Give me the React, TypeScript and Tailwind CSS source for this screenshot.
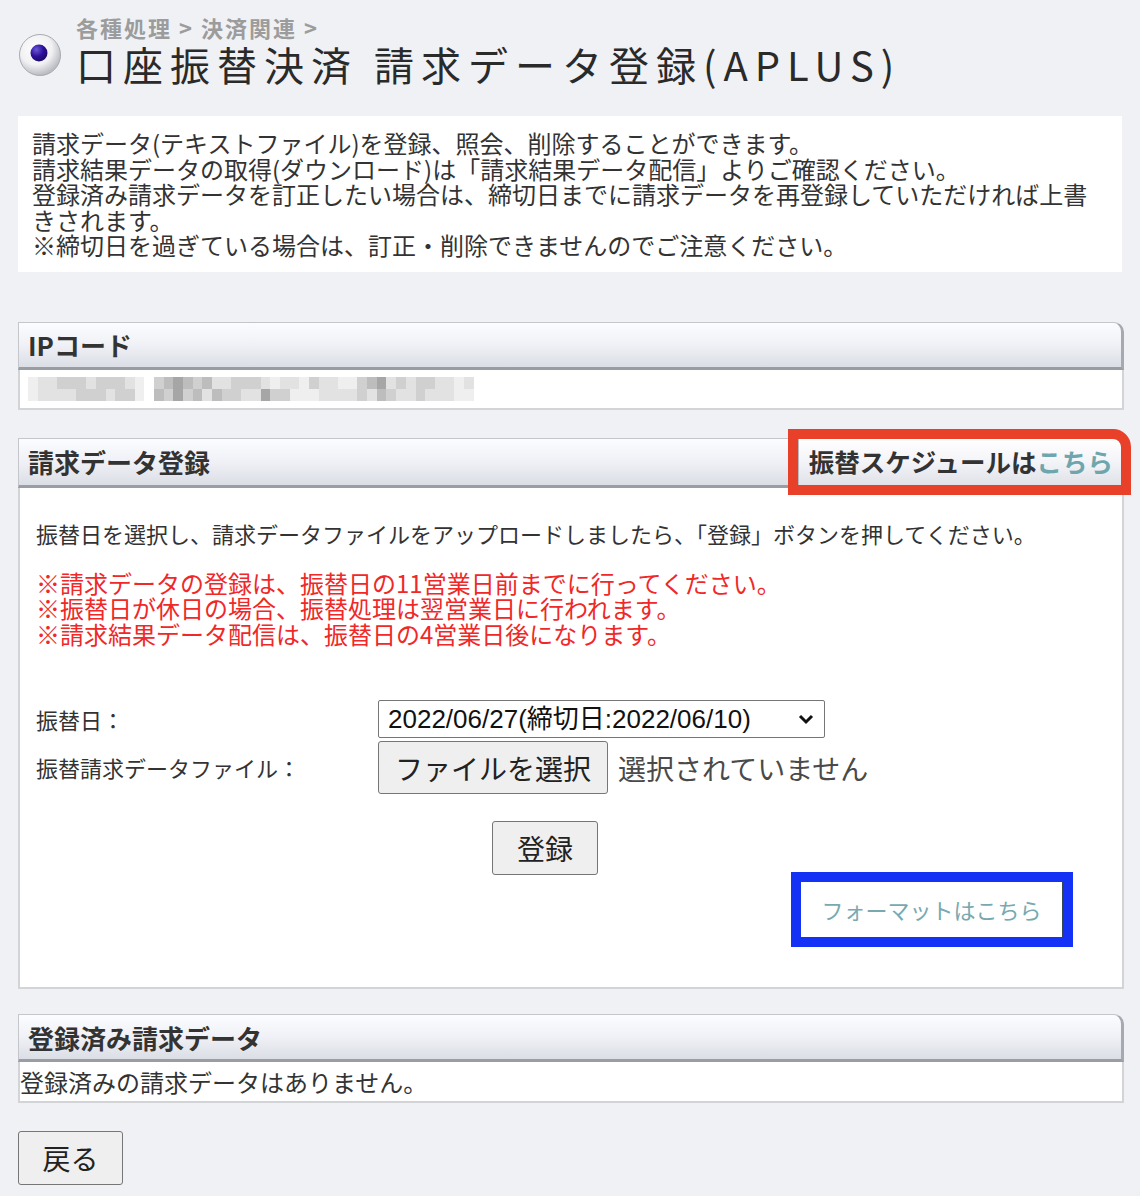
import React from "react";

const shades = [
  "bg-white",
  "bg-[#efefef]",
  "bg-[#e2e2e2]",
  "bg-[#d0d0d0]",
  "bg-[#bdbdbd]",
  "bg-[#a6a6a6]",
];

const row1 = "1223332333210345434223332122132211345232332212";
const row2 = "1222233323310435342433225331112222324322322211";

function Blur() {
  return (
    <div className="flex flex-col">
      {[row1, row2].map((r, i) => (
        <div key={i} className="flex">
          {r.split("").map((c, j) => (
            <div key={j} className={`h-[12px] w-[9.7px] ${shades[Number(c)]}`} />
          ))}
        </div>
      ))}
    </div>
  );
}

function Header({
  title,
  right,
  tall,
}: {
  title: string;
  right?: React.ReactNode;
  tall?: boolean;
}) {
  return (
    <div
      className={`flex ${tall ? "h-[50px]" : "h-[48px]"} items-stretch rounded-tr-[10px] border border-[#c4c6cb] border-b-[3px] border-b-[#9a9da4] border-r-[3px] border-r-[#a6a9b0] bg-gradient-to-b from-[#fbfcff] via-[#eff1f6] to-[#dcdee6]`}
    >
      <div className="flex flex-1 items-center pl-[9px] text-[26px] font-bold text-[#333]">
        {title}
      </div>
      {right}
    </div>
  );
}

export default function App() {
  return (
    <div className="min-h-[1196px] bg-[#eff1f5] px-[18px] pt-[14px] pb-[10px] font-['Noto_Sans_CJK_JP',sans-serif] text-[#333]">
      {/* Title */}
      <div className="flex items-start">
        <svg width="44" height="44" viewBox="0 0 44 44" className="mt-[19px] shrink-0">
          <defs>
            <radialGradient id="ring" cx="40%" cy="35%" r="65%">
              <stop offset="0%" stopColor="#ffffff" />
              <stop offset="60%" stopColor="#f1f1f3" />
              <stop offset="100%" stopColor="#b9bbc2" />
            </radialGradient>
            <radialGradient id="dot" cx="35%" cy="30%" r="75%">
              <stop offset="0%" stopColor="#6a5ad8" />
              <stop offset="55%" stopColor="#2e0f9a" />
              <stop offset="100%" stopColor="#1a0a60" />
            </radialGradient>
          </defs>
          <circle cx="22" cy="22" r="20.5" fill="url(#ring)" stroke="#a9abb2" strokeWidth="1" />
          <circle cx="21" cy="20" r="8.5" fill="url(#dot)" />
        </svg>
        <div className="ml-[14px] flex flex-col">
          <div className="text-[22px] leading-[26px] font-bold tracking-[2px] text-[#9c9c9c]">
            各種処理 &gt; 決済関連 &gt;
          </div>
          <div className="mt-[2px] text-[40px] leading-[44px] tracking-[7px] text-[#2a2a2a] whitespace-nowrap">
            口座振替決済 請求データ登録(APLUS)
          </div>
        </div>
      </div>

      {/* Notice */}
      <div className="mt-[30px] bg-white px-[14px] py-[14px] text-[24px] leading-[25.5px] whitespace-nowrap">
        請求データ(テキストファイル)を登録、照会、削除することができます。
        <br />
        請求結果データの取得(ダウンロード)は「請求結果データ配信」よりご確認ください。
        <br />
        登録済み請求データを訂正したい場合は、締切日までに請求データを再登録していただければ上書
        <br />
        きされます。
        <br />
        ※締切日を過ぎている場合は、訂正・削除できませんのでご注意ください。
      </div>

      {/* IP code */}
      <div className="mt-[50px] -mr-[2px]">
        <Header title="IPコード" />
        <div className="flex h-[40px] items-center border-x-2 border-b-2 border-[#d3d4d7] bg-white pl-[8px]">
          <Blur />
        </div>
      </div>

      {/* 請求データ登録 */}
      <div className="mt-[28px] -mr-[2px]">
        <Header
          tall
          title="請求データ登録"
          right={
            <div className="relative z-10 flex items-center rounded-tr-[8px] border-l border-[#b9bbc1] bg-gradient-to-b from-[#ffffff] via-[#f3f4f8] to-[#e0e2e8] pr-[8px] pl-[10px] text-[25.5px] font-bold text-[#333] outline-[10px] outline-[#e9402a]">
              振替スケジュールは<span className="text-[#6fa5ad]">こちら</span>
            </div>
          }
        />
        <div className="border-x-2 border-b-2 border-[#d3d4d7] bg-white pl-[16px] pt-[32px] pb-[50px]">
          <div className="text-[22px] leading-[26px] whitespace-nowrap">
            振替日を選択し、請求データファイルをアップロードしましたら、「登録」ボタンを押してください。
          </div>
          <div className="mt-[24px] text-[24px] leading-[25.5px] text-[#f02828] whitespace-nowrap">
            ※請求データの登録は、振替日の11営業日前までに行ってください。
            <br />
            ※振替日が休日の場合、振替処理は翌営業日に行われます。
            <br />
            ※請求結果データ配信は、振替日の4営業日後になります。
          </div>

          <div className="mt-[54px] grid grid-cols-[342px_auto] items-center gap-y-[3px]">
            <div className="text-[22px]">振替日：</div>
            <div>
              <div className="flex h-[38px] w-[447px] items-center justify-between rounded-[2px] border border-[#767676] bg-white pr-[10px] pl-[9px] font-['Liberation_Sans','Noto_Sans_CJK_JP',sans-serif] text-[26px] text-[#111]">
                <span className="whitespace-nowrap">2022/06/27(締切日:2022/06/10)</span>
                <svg width="16" height="12" viewBox="0 0 16 12">
                  <path d="M2 3 L8 9 L14 3" fill="none" stroke="#111" strokeWidth="3" />
                </svg>
              </div>
            </div>
            <div className="text-[22px] whitespace-nowrap">振替請求データファイル：</div>
            <div className="flex items-center">
              <div className="flex h-[53px] w-[230px] items-center justify-center rounded-[3px] border border-[#767676] bg-[#efefef] text-[28px] text-[#222]">
                ファイルを選択
              </div>
              <span className="ml-[10px] text-[28px] text-[#4a4a4a] whitespace-nowrap">選択されていません</span>
            </div>
          </div>

          <div className="mt-[27px] ml-[456px] flex h-[54px] w-[106px] items-center justify-center rounded-[3px] border border-[#767676] bg-[#efefef] text-[28px] text-[#222]">
            登録
          </div>

          <div className="mt-[7px] flex justify-end pr-[59px]">
            <div className="relative z-10 flex h-[55px] w-[262px] items-center justify-center border-r border-[#34465a] bg-white text-[22px] text-[#78a9b0] outline-[10px] outline-[#1432f6]">
              フォーマットはこちら
            </div>
          </div>
        </div>
      </div>

      {/* 登録済み請求データ */}
      <div className="mt-[25px] -mr-[2px]">
        <Header title="登録済み請求データ" />
        <div className="flex h-[41px] items-center border-x-2 border-b-2 border-[#d3d4d7] bg-white text-[24px] whitespace-nowrap">
          登録済みの請求データはありません。
        </div>
      </div>

      <div className="mt-[28px] flex h-[54px] w-[105px] items-center justify-center rounded-[3px] border border-[#767676] bg-[#efefef] text-[28px] text-[#222]">
        戻る
      </div>
    </div>
  );
}
